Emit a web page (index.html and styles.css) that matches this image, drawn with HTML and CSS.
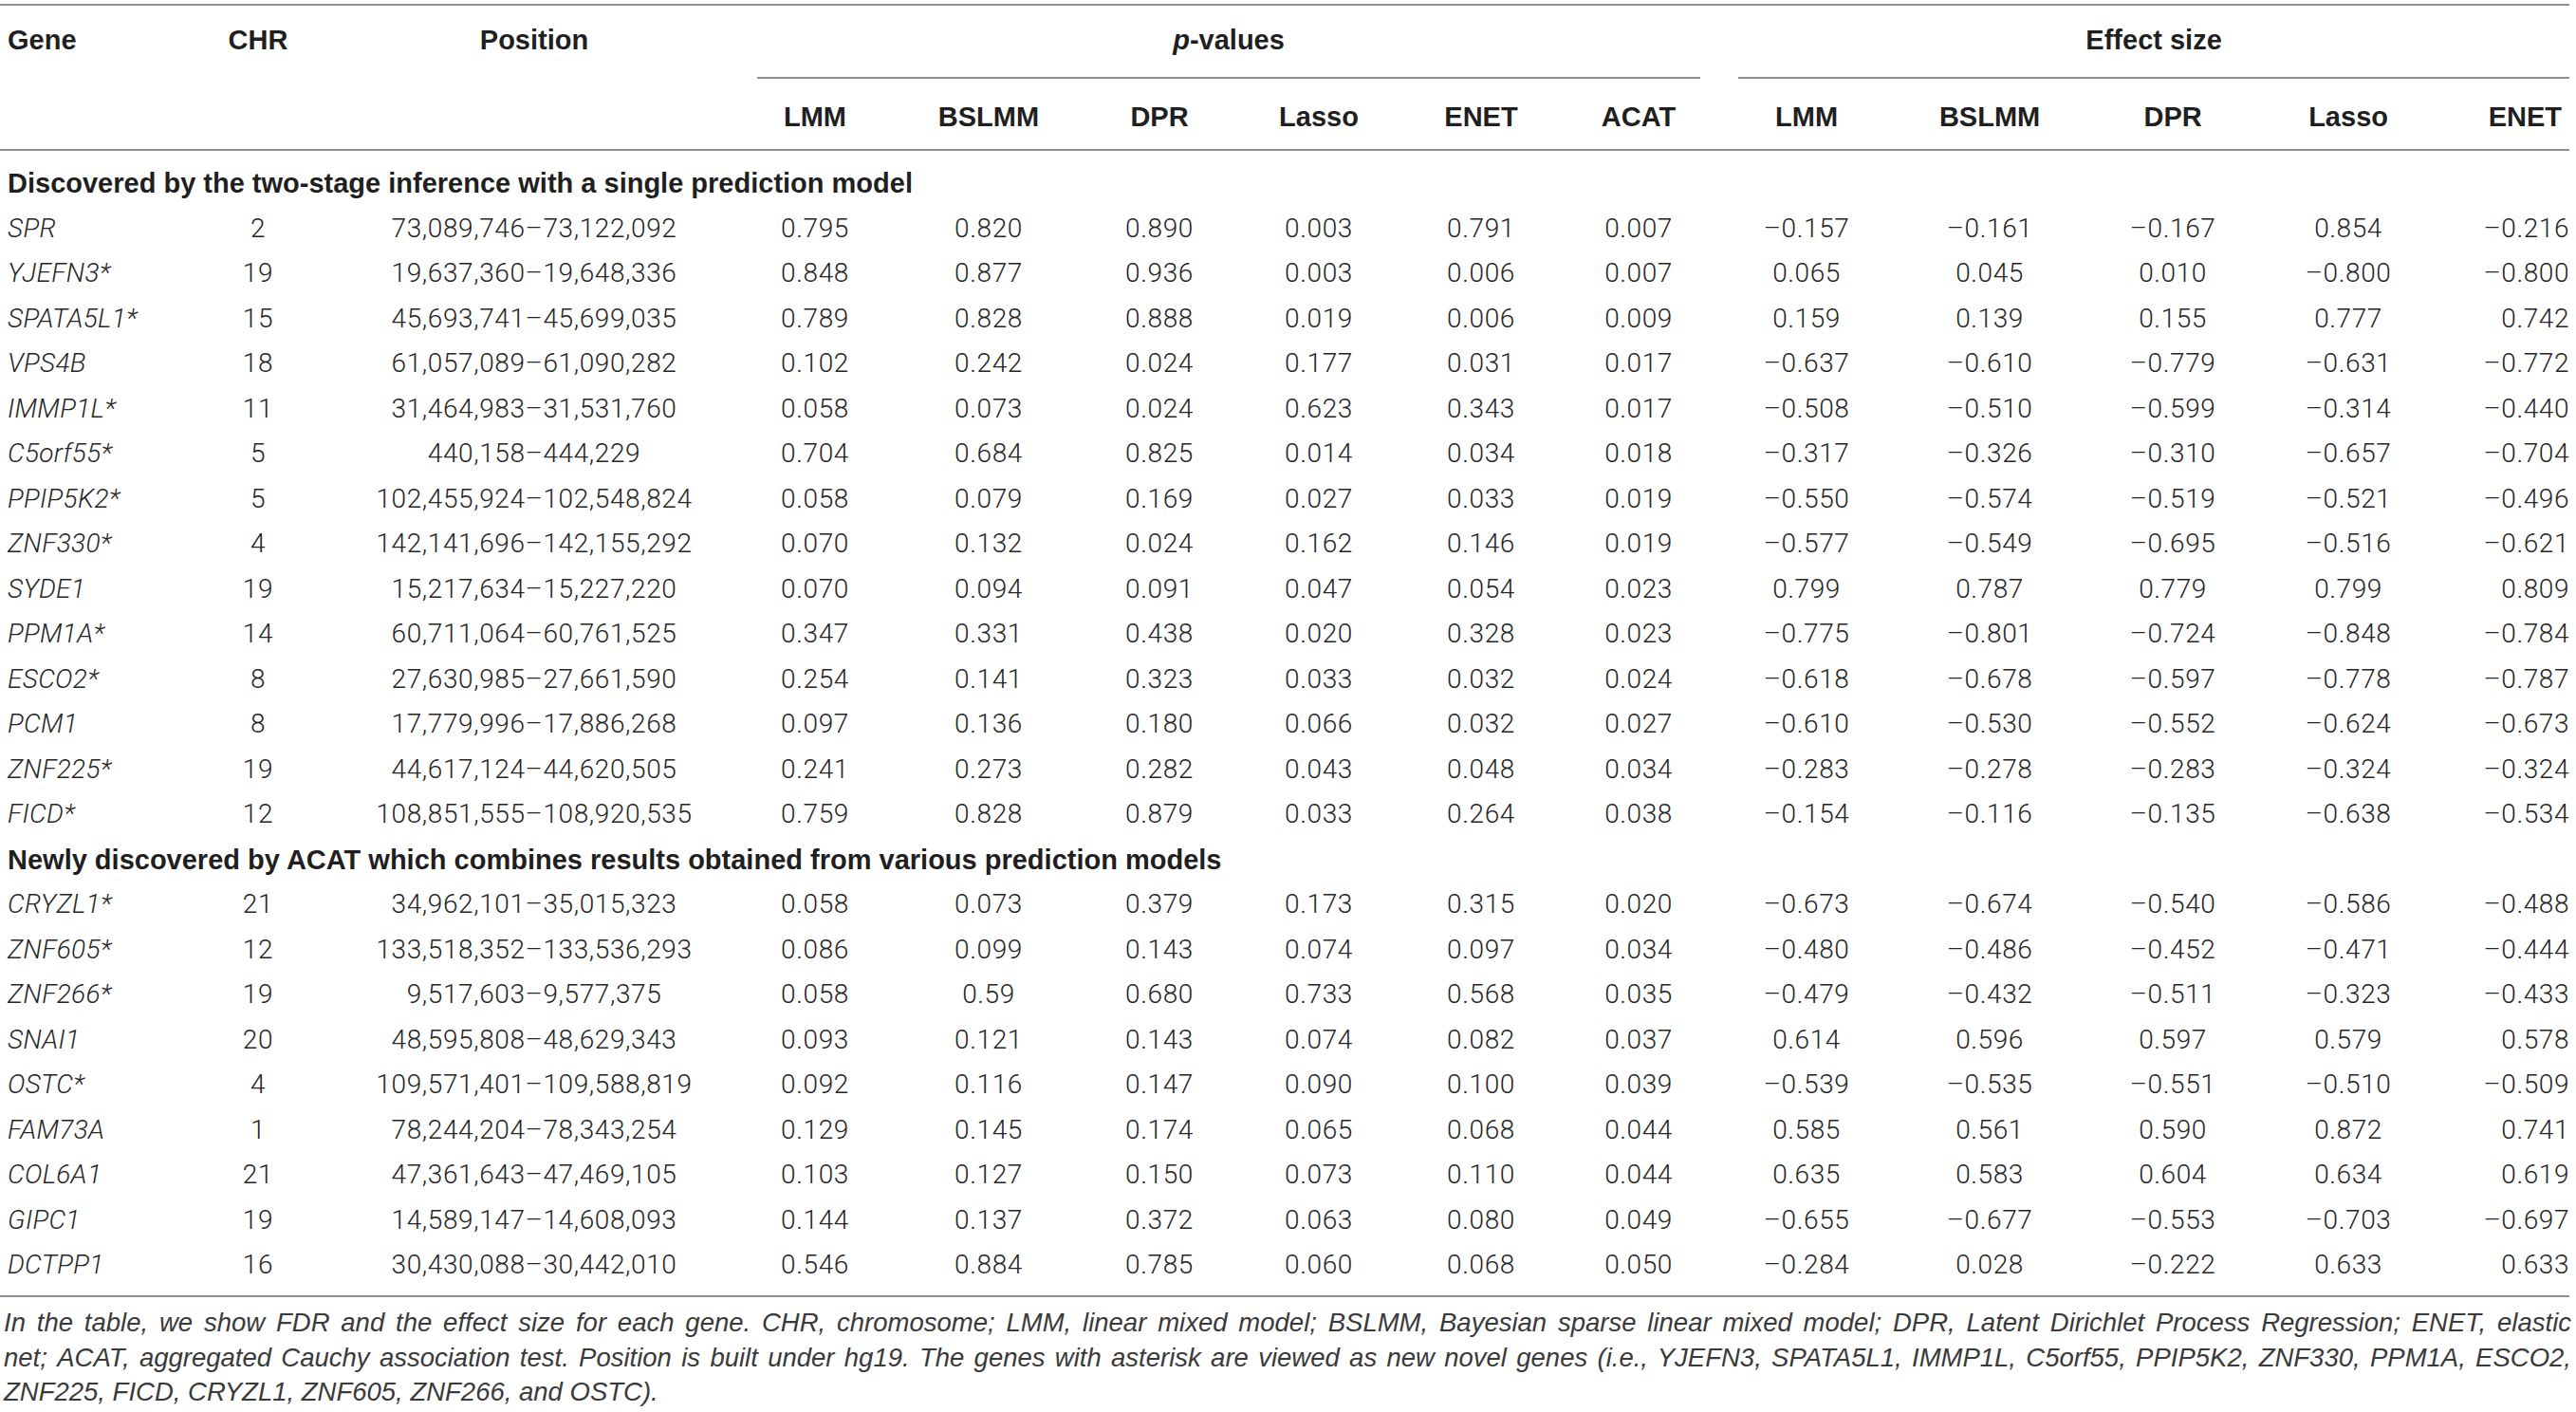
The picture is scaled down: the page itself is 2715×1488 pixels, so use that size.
FILE: index.html
```html
<!DOCTYPE html>
<html lang="en">
<head>
<meta charset="utf-8">
<title>Table</title>
<link rel="stylesheet" href="styles.css">
</head>
<body>
<table class="tbl">
  <colgroup>
    <col class="w-gene"><col class="w-chr"><col class="w-pos">
    <col class="w-p1"><col class="w-p2"><col class="w-p3"><col class="w-p4"><col class="w-p5"><col class="w-p6">
    <col class="w-e1"><col class="w-e2"><col class="w-e3"><col class="w-e4"><col class="w-e5">
  </colgroup>
  <thead>
    <tr class="hrow1">
      <th rowspan="2" class="rs gene-h">Gene</th>
      <th rowspan="2" class="rs">CHR</th>
      <th rowspan="2" class="rs">Position</th>
      <th colspan="6" class="grp"><div class="grp-line grp-p"><i>p</i>-values</div></th>
      <th colspan="5" class="grp"><div class="grp-line grp-e">Effect size</div></th>
    </tr>
    <tr class="hrow2">
      <th>LMM</th><th>BSLMM</th><th>DPR</th><th>Lasso</th><th>ENET</th><th>ACAT</th>
      <th>LMM</th><th>BSLMM</th><th>DPR</th><th>Lasso</th><th class="last-h">ENET</th>
    </tr>
  </thead>
  <tbody>
    <tr class="sec"><td colspan="14">Discovered by the two-stage inference with a single prediction model</td></tr>
    <tr><td>SPR</td><td>2</td><td>73,089,746–73,122,092</td><td>0.795</td><td>0.820</td><td>0.890</td><td>0.003</td><td>0.791</td><td>0.007</td><td>–0.157</td><td>–0.161</td><td>–0.167</td><td>0.854</td><td>–0.216</td></tr>
    <tr><td>YJEFN3*</td><td>19</td><td>19,637,360–19,648,336</td><td>0.848</td><td>0.877</td><td>0.936</td><td>0.003</td><td>0.006</td><td>0.007</td><td>0.065</td><td>0.045</td><td>0.010</td><td>–0.800</td><td>–0.800</td></tr>
    <tr><td>SPATA5L1*</td><td>15</td><td>45,693,741–45,699,035</td><td>0.789</td><td>0.828</td><td>0.888</td><td>0.019</td><td>0.006</td><td>0.009</td><td>0.159</td><td>0.139</td><td>0.155</td><td>0.777</td><td>0.742</td></tr>
    <tr><td>VPS4B</td><td>18</td><td>61,057,089–61,090,282</td><td>0.102</td><td>0.242</td><td>0.024</td><td>0.177</td><td>0.031</td><td>0.017</td><td>–0.637</td><td>–0.610</td><td>–0.779</td><td>–0.631</td><td>–0.772</td></tr>
    <tr><td>IMMP1L*</td><td>11</td><td>31,464,983–31,531,760</td><td>0.058</td><td>0.073</td><td>0.024</td><td>0.623</td><td>0.343</td><td>0.017</td><td>–0.508</td><td>–0.510</td><td>–0.599</td><td>–0.314</td><td>–0.440</td></tr>
    <tr><td>C5orf55*</td><td>5</td><td>440,158–444,229</td><td>0.704</td><td>0.684</td><td>0.825</td><td>0.014</td><td>0.034</td><td>0.018</td><td>–0.317</td><td>–0.326</td><td>–0.310</td><td>–0.657</td><td>–0.704</td></tr>
    <tr><td>PPIP5K2*</td><td>5</td><td>102,455,924–102,548,824</td><td>0.058</td><td>0.079</td><td>0.169</td><td>0.027</td><td>0.033</td><td>0.019</td><td>–0.550</td><td>–0.574</td><td>–0.519</td><td>–0.521</td><td>–0.496</td></tr>
    <tr><td>ZNF330*</td><td>4</td><td>142,141,696–142,155,292</td><td>0.070</td><td>0.132</td><td>0.024</td><td>0.162</td><td>0.146</td><td>0.019</td><td>–0.577</td><td>–0.549</td><td>–0.695</td><td>–0.516</td><td>–0.621</td></tr>
    <tr><td>SYDE1</td><td>19</td><td>15,217,634–15,227,220</td><td>0.070</td><td>0.094</td><td>0.091</td><td>0.047</td><td>0.054</td><td>0.023</td><td>0.799</td><td>0.787</td><td>0.779</td><td>0.799</td><td>0.809</td></tr>
    <tr><td>PPM1A*</td><td>14</td><td>60,711,064–60,761,525</td><td>0.347</td><td>0.331</td><td>0.438</td><td>0.020</td><td>0.328</td><td>0.023</td><td>–0.775</td><td>–0.801</td><td>–0.724</td><td>–0.848</td><td>–0.784</td></tr>
    <tr><td>ESCO2*</td><td>8</td><td>27,630,985–27,661,590</td><td>0.254</td><td>0.141</td><td>0.323</td><td>0.033</td><td>0.032</td><td>0.024</td><td>–0.618</td><td>–0.678</td><td>–0.597</td><td>–0.778</td><td>–0.787</td></tr>
    <tr><td>PCM1</td><td>8</td><td>17,779,996–17,886,268</td><td>0.097</td><td>0.136</td><td>0.180</td><td>0.066</td><td>0.032</td><td>0.027</td><td>–0.610</td><td>–0.530</td><td>–0.552</td><td>–0.624</td><td>–0.673</td></tr>
    <tr><td>ZNF225*</td><td>19</td><td>44,617,124–44,620,505</td><td>0.241</td><td>0.273</td><td>0.282</td><td>0.043</td><td>0.048</td><td>0.034</td><td>–0.283</td><td>–0.278</td><td>–0.283</td><td>–0.324</td><td>–0.324</td></tr>
    <tr><td>FICD*</td><td>12</td><td>108,851,555–108,920,535</td><td>0.759</td><td>0.828</td><td>0.879</td><td>0.033</td><td>0.264</td><td>0.038</td><td>–0.154</td><td>–0.116</td><td>–0.135</td><td>–0.638</td><td>–0.534</td></tr>
    <tr class="sec"><td colspan="14">Newly discovered by ACAT which combines results obtained from various prediction models</td></tr>
    <tr><td>CRYZL1*</td><td>21</td><td>34,962,101–35,015,323</td><td>0.058</td><td>0.073</td><td>0.379</td><td>0.173</td><td>0.315</td><td>0.020</td><td>–0.673</td><td>–0.674</td><td>–0.540</td><td>–0.586</td><td>–0.488</td></tr>
    <tr><td>ZNF605*</td><td>12</td><td>133,518,352–133,536,293</td><td>0.086</td><td>0.099</td><td>0.143</td><td>0.074</td><td>0.097</td><td>0.034</td><td>–0.480</td><td>–0.486</td><td>–0.452</td><td>–0.471</td><td>–0.444</td></tr>
    <tr><td>ZNF266*</td><td>19</td><td>9,517,603–9,577,375</td><td>0.058</td><td>0.59</td><td>0.680</td><td>0.733</td><td>0.568</td><td>0.035</td><td>–0.479</td><td>–0.432</td><td>–0.511</td><td>–0.323</td><td>–0.433</td></tr>
    <tr><td>SNAI1</td><td>20</td><td>48,595,808–48,629,343</td><td>0.093</td><td>0.121</td><td>0.143</td><td>0.074</td><td>0.082</td><td>0.037</td><td>0.614</td><td>0.596</td><td>0.597</td><td>0.579</td><td>0.578</td></tr>
    <tr><td>OSTC*</td><td>4</td><td>109,571,401–109,588,819</td><td>0.092</td><td>0.116</td><td>0.147</td><td>0.090</td><td>0.100</td><td>0.039</td><td>–0.539</td><td>–0.535</td><td>–0.551</td><td>–0.510</td><td>–0.509</td></tr>
    <tr><td>FAM73A</td><td>1</td><td>78,244,204–78,343,254</td><td>0.129</td><td>0.145</td><td>0.174</td><td>0.065</td><td>0.068</td><td>0.044</td><td>0.585</td><td>0.561</td><td>0.590</td><td>0.872</td><td>0.741</td></tr>
    <tr><td>COL6A1</td><td>21</td><td>47,361,643–47,469,105</td><td>0.103</td><td>0.127</td><td>0.150</td><td>0.073</td><td>0.110</td><td>0.044</td><td>0.635</td><td>0.583</td><td>0.604</td><td>0.634</td><td>0.619</td></tr>
    <tr><td>GIPC1</td><td>19</td><td>14,589,147–14,608,093</td><td>0.144</td><td>0.137</td><td>0.372</td><td>0.063</td><td>0.080</td><td>0.049</td><td>–0.655</td><td>–0.677</td><td>–0.553</td><td>–0.703</td><td>–0.697</td></tr>
    <tr><td>DCTPP1</td><td>16</td><td>30,430,088–30,442,010</td><td>0.546</td><td>0.884</td><td>0.785</td><td>0.060</td><td>0.068</td><td>0.050</td><td>–0.284</td><td>0.028</td><td>–0.222</td><td>0.633</td><td>0.633</td></tr>
  </tbody>
</table>
<p class="note">In the table, we show FDR and the effect size for each gene. CHR, chromosome; LMM, linear mixed model; BSLMM, Bayesian sparse linear mixed model; DPR, Latent Dirichlet Process Regression; ENET, elastic net;&nbsp;ACAT, aggregated Cauchy association test. Position is built under hg19. The genes with asterisk are viewed as new novel genes (i.e., YJEFN3, SPATA5L1, IMMP1L, C5orf55, PPIP5K2, ZNF330, PPM1A, ESCO2, ZNF225, FICD, CRYZL1, ZNF605, ZNF266, and OSTC).</p>
</body>
</html>
```

FILE: styles.css
```css
html, body {
  margin: 0;
  background: #ffffff;
}
body {
  padding-top: 4px;
}
.tbl {
  border-collapse: separate;
  border-spacing: 0;
  table-layout: fixed;
  width: 2708px;
  border-top: 2px solid #8f8f8f;
  border-bottom: 2px solid #8f8f8f;
  font-family: "Roboto", "Liberation Sans", sans-serif;
  font-weight: 300;
  font-size: 28px;
  line-height: 34px;
  color: #262626;
}
.w-gene { width: 190px; }
.w-chr { width: 164px; }
.w-pos { width: 418px; }
.w-p1 { width: 174px; }
.w-p2 { width: 192px; }
.w-p3 { width: 168px; }
.w-p4 { width: 168px; }
.w-p5 { width: 174px; }
.w-p6 { width: 158px; }
.w-e1 { width: 196px; }
.w-e2 { width: 190px; }
.w-e3 { width: 196px; }
.w-e4 { width: 174px; }
.w-e5 { width: 146px; }

.tbl th {
  font-family: "Liberation Sans", Arial, sans-serif;
  font-weight: 700;
  font-size: 29px;
  color: #1f1f1f;
  padding: 0;
  text-align: center;
  vertical-align: top;
  white-space: nowrap;
}
.hrow1 th {
  padding-top: 19px;
}
.hrow1 th.rs {
  border-bottom: 2px solid #8f8f8f;
}
.hrow1 th.gene-h {
  text-align: left;
  padding-left: 8px;
}
.grp-line {
  padding-bottom: 22px;
  border-bottom: 2px solid #8f8f8f;
}
.grp-p {
  margin: 0 14px 0 26px;
}
.grp-e {
  margin: 0 0 0 26px;
}
.hrow2 th {
  padding-top: 23px;
  padding-bottom: 17px;
  border-bottom: 2px solid #8f8f8f;
}
.hrow2 th.last-h {
  text-align: right;
  padding-right: 8px;
}

.tbl td {
  padding: 6.75px 0;
  text-align: center;
  vertical-align: top;
  white-space: nowrap;
  letter-spacing: 0.6px;
}
.tbl td:first-child {
  text-align: left;
  padding-left: 8px;
  font-style: italic;
  letter-spacing: 0.3px;
}
.tbl td:last-child {
  text-align: right;
}
.tbl tr.sec td {
  font-family: "Liberation Sans", Arial, sans-serif;
  font-weight: 700;
  font-size: 29px;
  font-style: normal;
  letter-spacing: 0;
  color: #1f1f1f;
  text-align: left;
}
.tbl tbody tr:first-child td {
  padding-top: 17.25px;
}
.tbl tbody tr:last-child td {
  padding-bottom: 14.75px;
}

.note {
  margin: 0;
  width: 2710px;
  padding: 9px 0 0 4px;
  box-sizing: border-box;
  font-family: "Liberation Sans", Arial, sans-serif;
  font-weight: 400;
  font-style: italic;
  font-size: 27.5px;
  line-height: 36.5px;
  text-align: justify;
  color: #3a3a3a;
}
```
